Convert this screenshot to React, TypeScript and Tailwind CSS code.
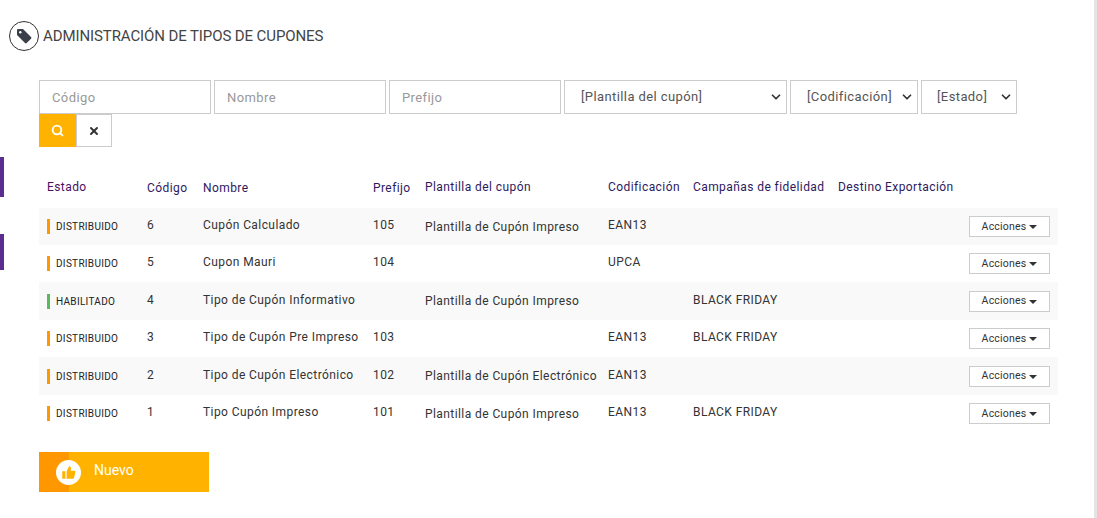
import { ChevronDown, Search, X } from "lucide-react";

const rows = [
  { estado: "DISTRIBUIDO", color: "bg-[#ff9800]", codigo: "6", nombre: "Cupón Calculado", prefijo: "105", plantilla: "Plantilla de Cupón Impreso", cod: "EAN13", camp: "", h: "h-[37px]" },
  { estado: "DISTRIBUIDO", color: "bg-[#ff9800]", codigo: "5", nombre: "Cupon Mauri", prefijo: "104", plantilla: "", cod: "UPCA", camp: "", h: "h-[37px]" },
  { estado: "HABILITADO", color: "bg-[#5cb85c]", codigo: "4", nombre: "Tipo de Cupón Informativo", prefijo: "", plantilla: "Plantilla de Cupón Impreso", cod: "", camp: "BLACK FRIDAY", h: "h-[38px]" },
  { estado: "DISTRIBUIDO", color: "bg-[#ff9800]", codigo: "3", nombre: "Tipo de Cupón Pre Impreso", prefijo: "103", plantilla: "", cod: "EAN13", camp: "BLACK FRIDAY", h: "h-[37px]" },
  { estado: "DISTRIBUIDO", color: "bg-[#ff9800]", codigo: "2", nombre: "Tipo de Cupón Electrónico", prefijo: "102", plantilla: "Plantilla de Cupón Electrónico", cod: "EAN13", camp: "", h: "h-[38px]" },
  { estado: "DISTRIBUIDO", color: "bg-[#ff9800]", codigo: "1", nombre: "Tipo Cupón Impreso", prefijo: "101", plantilla: "Plantilla de Cupón Impreso", cod: "EAN13", camp: "BLACK FRIDAY", h: "h-[37px]" },
];

const inputClass = "h-[34px] border border-[#ccc] bg-white px-3 text-[13px] tracking-[0.4px] placeholder:text-[#999] outline-none";
const selectClass = "relative flex h-[34px] items-center border border-[#ccc] bg-white text-[13px] tracking-[0.4px] text-[#555]";

export default function App() {
  return (
    <div className="relative h-[518px] w-[1097px] overflow-hidden border-r-[3px] border-[#e4e4e4] bg-white font-['Roboto',sans-serif] text-[12px] tracking-[0.42px] text-[#333]">
      <div className="absolute left-0 top-[157px] h-[40px] w-[4px] bg-[#5c2d91]" />
      <div className="absolute left-0 top-[234px] h-[36px] w-[4px] bg-[#5c2d91]" />

      <div className="flex items-center gap-[4px] pl-[9px] pt-[21px]">
        <div className="flex h-[30px] w-[30px] items-center justify-center rounded-full border border-[#333]">
          <svg viewBox="0 0 16 16" className="h-[16px] w-[16px]" fill="#3a3f4a">
            <path d="M1 2.2C1 1.5 1.5 1 2.2 1H7l8 8c.5.5.5 1.2 0 1.7L10.700 15c-.5.5-1.200.5-1.700 0L1 7z" />
            <circle cx="4.300" cy="4.300" r="1.200" fill="#fff" />
          </svg>
        </div>
        <h1 className="text-[15px] tracking-[-0.1px] text-[#444]">ADMINISTRACIÓN DE TIPOS DE CUPONES</h1>
      </div>

      <div className="ml-[39px] mt-[29px] flex w-[990px] gap-[3px]">
        <input className={`${inputClass} w-[172px]`} placeholder="Código" />
        <input className={`${inputClass} w-[172px]`} placeholder="Nombre" />
        <input className={`${inputClass} w-[172px]`} placeholder="Prefijo" />
        <div className={`${selectClass} w-[223px] pl-[16px]`}>
          [Plantilla del cupón]
          <ChevronDown className="absolute right-[3px] h-[14px] w-[14px] text-[#333]" strokeWidth={3} />
        </div>
        <div className={`${selectClass} w-[128px] pl-[16px]`}>
          [Codificación]
          <ChevronDown className="absolute right-[3px] h-[14px] w-[14px] text-[#333]" strokeWidth={3} />
        </div>
        <div className={`${selectClass} w-[96px] pl-[15px]`}>
          [Estado]
          <ChevronDown className="absolute right-[3px] h-[14px] w-[14px] text-[#333]" strokeWidth={3} />
        </div>
      </div>
      <div className="ml-[39px] flex">
        <button className="flex h-[33px] w-[37px] items-center justify-center bg-[#ffb300]">
          <Search className="h-[13px] w-[13px] text-white" strokeWidth={3.5} />
        </button>
        <button className="flex h-[33px] w-[36px] items-center justify-center border border-[#ccc] bg-white">
          <X className="h-[12px] w-[12px] text-[#333]" strokeWidth={4} />
        </button>
      </div>

      <table className="ml-[39px] mt-[28px] w-[1019px] table-fixed border-collapse">
        <thead>
          <tr className="h-[33px] text-left font-normal text-[#2d1a5e]">
            <th className="w-[100px] pb-[10px] pl-[8px] font-normal text-[#4b0f5e]">Estado</th>
            <th className="w-[56px] pb-[7px] pl-[8px] font-normal">Código</th>
            <th className="w-[170px] pb-[7px] pl-[8px] font-normal">Nombre</th>
            <th className="w-[52px] pb-[7px] pl-[8px] font-normal">Prefijo</th>
            <th className="w-[183px] pb-[10px] pl-[8px] font-normal">Plantilla del cupón</th>
            <th className="w-[85px] pb-[10px] pl-[8px] font-normal">Codificación</th>
            <th className="w-[145px] pb-[10px] pl-[8px] font-normal">Campañas de fidelidad</th>
            <th className="w-[130px] pb-[10px] pl-[8px] font-normal">Destino Exportación</th>
            <th />
          </tr>
        </thead>
        <tbody>
          {rows.map((r) => (
            <tr key={r.codigo} className={`${r.h} odd:bg-[#f9f9f9]`}>
              <td className="pl-[8px]">
                <div className="flex items-center gap-[6px] text-[10px] tracking-[0.3px] text-[#222]">
                  <span className={`h-[15px] w-[3px] ${r.color}`} />
                  {r.estado}
                </div>
              </td>
              <td className="pb-[3px] pl-[8px]">{r.codigo}</td>
              <td className="pb-[3px] pl-[8px]">{r.nombre}</td>
              <td className="pb-[3px] pl-[8px]">{r.prefijo}</td>
              <td className="pl-[8px]">{r.plantilla}</td>
              <td className="pb-[3px] pl-[8px]">{r.cod}</td>
              <td className="pb-[3px] pl-[8px]">{r.camp}</td>
              <td />
              <td className="pr-[8px] text-right">
                <button className="inline-flex h-[21px] w-[81px] items-center justify-center gap-[3px] border border-[#ccc] bg-white text-[10.500px] tracking-[0.2px] text-[#333]">
                  Acciones
                  <span className="mt-[1px] border-x-[4px] border-t-[4px] border-x-transparent border-t-[#333]" />
                </button>
              </td>
            </tr>
          ))}
        </tbody>
      </table>

      <button className="ml-[39px] mt-[20px] flex h-[40px] w-[170px] items-center bg-[linear-gradient(90deg,#ff9800_30px,#ffb300_30px)] pl-[17px] text-white">
        <span className="flex h-[25px] w-[25px] items-center justify-center rounded-full bg-white">
          <svg viewBox="0 0 24 24" className="h-[15px] w-[15px]" fill="#ffb300">
            <path d="M2 10h5v12H2zM9 10l4-8c2 0 3 1.500 3 3l-.5 4H21c1.500 0 2.300 1.300 2 2.500l-2 8.500c-.3 1-1 2-2.500 2H9z" />
          </svg>
        </span>
        <span className="ml-[13px] mb-[3px] text-[14px] tracking-normal">Nuevo</span>
      </button>
    </div>
  );
}
